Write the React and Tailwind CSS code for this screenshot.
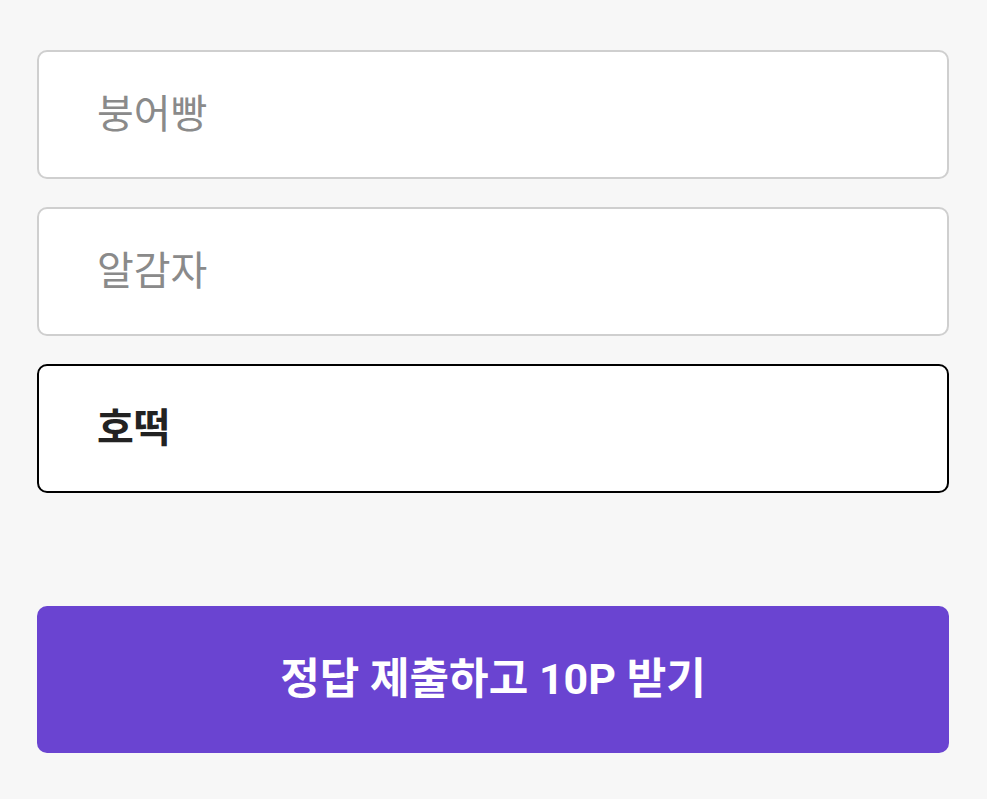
import React, { useState } from "react";

const options = ["붕어빵", "알감자", "호떡"];

export default function App() {
  const [selected, setSelected] = useState(2);

  return (
    <div
      className="min-h-screen bg-[#f7f7f7] pl-[37px] pr-[38px] pt-[50px]"
      style={{ fontFamily: "Roboto, 'Noto Sans CJK KR', sans-serif" }}
    >
      <div className="flex flex-col gap-[28px]">
        {options.map((opt, i) => (
          <button
            key={opt}
            onClick={() => setSelected(i)}
            className={
              selected === i
                ? "flex h-[129px] w-full items-center rounded-[10px] border-2 border-black bg-white pl-[58px] text-left text-[40px] font-bold text-[#222]"
                : "flex h-[129px] w-full items-center rounded-[10px] border-2 border-[#cfcfcf] bg-white pl-[58px] text-left text-[40px] text-[#8a8a8a]"
            }
          >
            {opt}
          </button>
        ))}
      </div>

      <button className="mt-[113px] flex h-[147px] w-full items-center justify-center rounded-[10px] bg-[#6a44d1] text-[43px] font-bold text-white">
        정답 제출하고 10P 받기
      </button>
    </div>
  );
}
